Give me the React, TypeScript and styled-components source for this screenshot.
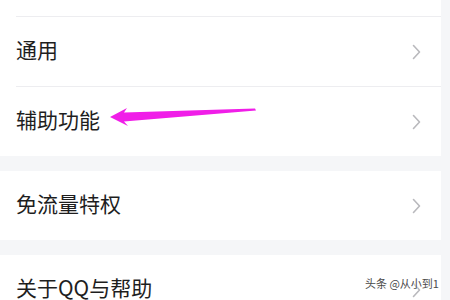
import styled, { createGlobalStyle } from "styled-components";

const GlobalStyle = createGlobalStyle`
  html, body {
    margin: 0;
    padding: 0;
    background: #f5f6f8;
  }
  body {
    font-family: "Noto Sans CJK SC", "Noto Sans", sans-serif;
  }
`;

const Screen = styled.div`
  position: relative;
  width: 450px;
  height: 300px;
  overflow: hidden;
  background: #f5f6f8;
`;

const List = styled.div`
  width: 441px;
  display: flex;
  flex-direction: column;
  gap: 15px;
`;

const Group = styled.div`
  display: flex;
  flex-direction: column;
  background: #ffffff;
`;

const ClippedRow = styled.div`
  height: 16px;
`;

const Row = styled.div`
  height: 69px;
  display: flex;
  align-items: center;
  justify-content: space-between;
  padding: 0 20px 0 16px;
`;

const Divider = styled.div`
  height: 1px;
  margin-left: 16px;
  background: #ededf0;
`;

const Label = styled.span`
  font-size: 21px;
  line-height: 1;
  color: #1e1e1e;
  position: relative;
  top: -2px;
`;

const Watermark = styled.div`
  position: absolute;
  left: 365px;
  top: 276px;
  font-size: 11px;
  line-height: 14px;
  color: #4a4a4a;
  white-space: nowrap;
  text-shadow: 0 0 2px #ffffff, 0 0 2px #ffffff;
`;

const Overlay = styled.svg`
  position: absolute;
  left: 0;
  top: 0;
  pointer-events: none;
`;

function Chevron() {
  return (
    <svg width="9" height="16" viewBox="0 0 9 16">
      <path
        d="M1.5 1.5 L7.5 8 L1.5 14.5"
        fill="none"
        stroke="#b9b9bd"
        strokeWidth="1.6"
        strokeLinecap="round"
        strokeLinejoin="round"
      />
    </svg>
  );
}

interface ItemProps {
  label: string;
}

function Item({ label }: ItemProps) {
  return (
    <Row>
      <Label>{label}</Label>
      <Chevron />
    </Row>
  );
}

export default function App() {
  return (
    <Screen>
      <GlobalStyle />
      <List>
        <Group>
          <ClippedRow />
          <Divider />
          <Item label="通用" />
          <Divider />
          <Item label="辅助功能" />
        </Group>
        <Group>
          <Item label="免流量特权" />
        </Group>
        <Group>
          <Item label="关于QQ与帮助" />
        </Group>
      </List>
      <Overlay width="450" height="300" viewBox="0 0 450 300">
        <polygon
          points="110,117 127,108 124,112.5 255,108.5 256,110.5 124,121.5 128,126"
          fill="#f01ee8"
        />
      </Overlay>
      <Watermark>头条 @从小到1</Watermark>
    </Screen>
  );
}
